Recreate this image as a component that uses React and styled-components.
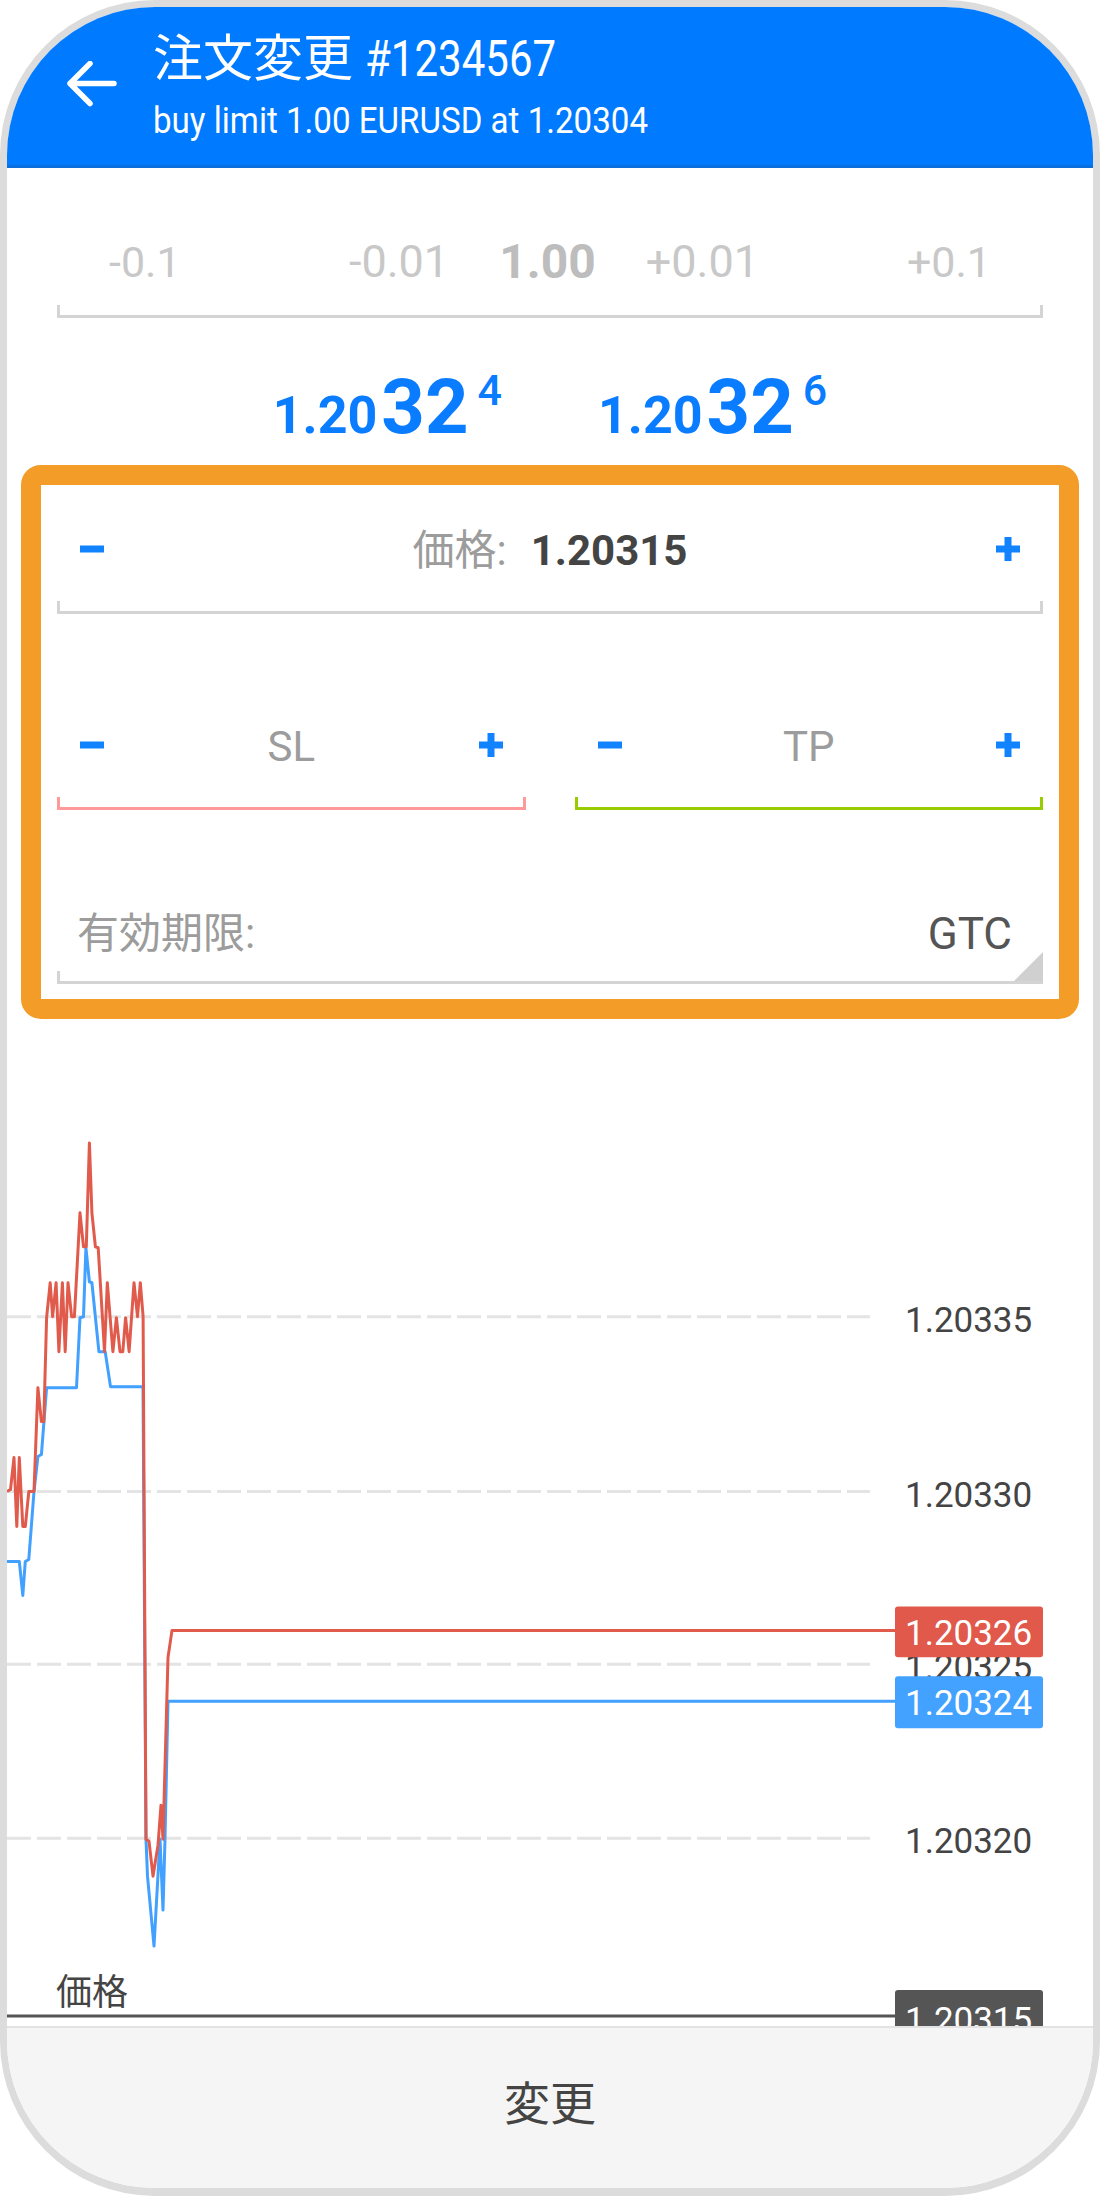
import React from 'react';
import styled, { createGlobalStyle } from 'styled-components';

const GlobalStyle = createGlobalStyle`
	html, body {
		margin: 0;
		background: #fff;
		font-family: Roboto, "Noto Sans CJK JP", sans-serif;
	}
`;

const Frame = styled.div`
	height: 2196px;
	box-sizing: border-box;
	border: 7px solid #dcdcdc;
	border-bottom-width: 8px;
	border-radius: 155px;
	overflow: hidden;
	display: flex;
	flex-direction: column;
	background: #fff;
`;

const Header = styled.header`
	flex: none;
	height: 161px;
	box-sizing: border-box;
	display: flex;
	align-items: flex-start;
	gap: 36px;
	padding: 22px 0 0 60px;
	background: #007aff;
	border-bottom: 3px solid #0a6fdd;
	color: #fff;
`;

const BackIcon = styled.svg`
	flex: none;
	width: 50px;
	height: 46px;
	margin-top: 32px;
`;

const Titles = styled.div`
	display: flex;
	flex-direction: column;
	white-space: nowrap;
`;

const Title = styled.div`
	font-size: 50px;
	line-height: 60px;
`;

const Subtitle = styled.div`
	font-size: 36px;
	line-height: 44px;
	margin-top: 10px;
`;

const Narrow = styled.span`
	display: inline-block;
	transform: scaleX(${p => p.$scale});
	transform-origin: left center;
`;

const LotSection = styled.div`
	flex: none;
	padding: 59px 50px 0;
`;

const LotRow = styled.div`
	display: grid;
	grid-template-columns: 1fr auto 1fr;
	align-items: center;
	height: 70px;
	padding: 0 52px;
	font-size: 43px;
	line-height: 70px;
	color: #c8c8c8;
	margin-bottom: 8px;
`;

const LotStep = styled.span`
	justify-self: ${p => p.$side};
`;

const LotCenter = styled.div`
	display: flex;
	gap: 50px;
	font-size: 45px;
	transform: translateX(4px);
`;

const LotValue = styled.span`
	font-size: 48px;
	font-weight: 700;
	color: #bdbdbd;
`;

const Bracket = styled.div`
	position: relative;
	height: 13px;
	box-sizing: border-box;
	border: 3px solid ${p => p.$color || '#d4d4d4'};
	border-top: none;
	${p => p.$spinner && `
		&::after {
			content: '';
			position: absolute;
			right: -3px;
			bottom: 0;
			width: 29px;
			height: 29px;
			background: #d0d0d0;
			clip-path: polygon(100% 0, 100% 100%, 0 100%);
		}
	`}
`;

const Quotes = styled.div`
	flex: none;
	display: flex;
	justify-content: center;
	gap: 96px;
	margin: 51px 0 20px;
`;

const Quote = styled.div`
	display: flex;
	align-items: baseline;
	color: #0a7cff;
	font-weight: 700;
	line-height: 1;
`;

const QuoteSmall = styled.span`
	font-size: 52px;
`;

const QuoteBig = styled.span`
	font-size: 76px;
	margin-left: 4px;
`;

const QuoteSup = styled.span`
	align-self: flex-start;
	font-size: 43px;
	font-weight: 500;
	margin-left: 9px;
`;

const OrderBox = styled.section`
	flex: none;
	margin: 0 14px;
	border: 20px solid #f39c27;
	border-radius: 20px;
	padding: 26px 16px 15px;
	background: #fff;
`;

const StepRow = styled.div`
	display: flex;
	align-items: center;
	justify-content: space-between;
	height: 80px;
	padding: 0 23px;
	margin-bottom: 10px;
	font-size: 42px;
	line-height: 1;
	color: #9c9c9c;
`;

const SignIcon = styled.svg`
	flex: none;
	width: 24px;
	height: 24px;
	fill: #1283ff;
	margin-bottom: 4px;
`;

const FieldValue = styled.span`
	margin-left: 24px;
	font-weight: 700;
	color: #444;
`;

const PairRow = styled.div`
	display: grid;
	grid-template-columns: 1fr 1fr;
	column-gap: 49px;
	margin-top: 93px;
`;

const ExpiryRow = styled.div`
	display: flex;
	align-items: center;
	justify-content: space-between;
	height: 70px;
	margin: 89px 0 2px;
	padding: 0 31px 0 20px;
	line-height: 1;
`;

const ExpiryLabel = styled.span`
	font-size: 42px;
	color: #9c9c9c;
`;

const ExpiryValue = styled.span`
	font-size: 44px;
	color: #555;
`;

const ChartArea = styled.div`
	flex: 1;
	min-height: 0;
`;

const ChartSvg = styled.svg`
	display: block;
	width: 100%;
	height: 100%;
	font-family: Roboto, "Noto Sans CJK JP", sans-serif;
`;

const Footer = styled.footer`
	flex: none;
	height: 162px;
	box-sizing: border-box;
	display: flex;
	align-items: center;
	justify-content: center;
	padding-bottom: 8px;
	background: #f5f5f5;
	border-top: 2px solid #e3e3e3;
	font-size: 46px;
	line-height: 1;
	color: #444;
`;

const Sign = ({ plus }) => (
	<SignIcon viewBox="0 0 24 24">
		<rect x="0" y="8.5" width="24" height="7" />
		{plus && <rect x="8.5" y="0" width="7" height="24" />}
	</SignIcon>
);

const Stepper = ({ children }) => (
	<StepRow>
		<Sign />
		<span>{children}</span>
		<Sign plus />
	</StepRow>
);

const red = [
	[7, 1491], [10.5, 1489], [14, 1457], [16.8, 1526], [19.3, 1457], [22.8, 1526], [25.3, 1526],
	[28.8, 1491], [34, 1491], [37.9, 1387], [41.4, 1421], [43.8, 1421], [46.6, 1317], [50.2, 1282],
	[52.6, 1316], [56.1, 1282], [58.9, 1351], [62.4, 1282], [65.2, 1351], [68, 1282], [71.6, 1316],
	[74.4, 1316], [80, 1212], [83.5, 1246], [86.3, 1246], [89.4, 1142], [91.9, 1212], [95.4, 1246],
	[98.2, 1247], [104.5, 1351], [107.3, 1282], [112.9, 1351], [116.4, 1317], [120, 1351],
	[122.8, 1351], [125.6, 1317], [129.1, 1351], [134, 1282], [137.5, 1316], [140.3, 1282],
	[143.1, 1316], [146, 1839], [149, 1841], [153, 1876], [158, 1845], [161, 1805], [163, 1839],
	[168, 1657], [172, 1630], [895, 1630],
];

const blue = [
	[7, 1561], [19.3, 1561], [22.8, 1595], [25.3, 1561], [28.8, 1559], [34, 1491], [37.9, 1456],
	[41.4, 1454], [46.6, 1387], [76.5, 1387], [80, 1317], [83.5, 1316], [85.9, 1247], [89.4, 1281],
	[91.9, 1282], [98.9, 1351], [105.2, 1351], [110.5, 1386], [143, 1386], [146, 1839],
	[147.5, 1876], [154, 1946], [160, 1839], [163, 1910], [165, 1839], [168, 1701], [895, 1701],
];

const grid = [
	{ y: 1316, label: '1.20335' },
	{ y: 1491, label: '1.20330' },
	{ y: 1664, label: '1.20325' },
	{ y: 1838, label: '1.20320' },
];

const pts = list => list.map(p => p.join(',')).join(' ');

const Chart = () => (
	<ChartArea>
		<ChartSvg viewBox="7 1018 1086 1008" preserveAspectRatio="none">
			{grid.map(g => (
				<g key={g.label}>
					<line x1="7" x2="870" y1={g.y} y2={g.y} stroke="#e4e4e4" strokeWidth="3" strokeDasharray="24 6" />
					<text x="905" y={g.y + 15} fontSize="35" fill="#444">{g.label}</text>
				</g>
			))}
			<polyline points={pts(blue)} fill="none" stroke="#42a0ff" strokeWidth="3" strokeLinejoin="round" />
			<polyline points={pts(red)} fill="none" stroke="#e15b4c" strokeWidth="3" strokeLinejoin="round" />
			<rect x="895" y="1606" width="148" height="51" rx="3" fill="#e0594b" />
			<text x="905" y="1645" fontSize="35" fill="#fff">1.20326</text>
			<rect x="895" y="1676" width="148" height="52" rx="3" fill="#43a1ff" />
			<text x="905" y="1715" fontSize="35" fill="#fff">1.20324</text>
			<text x="56" y="2005" fontSize="36" fill="#444">価格</text>
			<line x1="7" x2="895" y1="2016" y2="2016" stroke="#555" strokeWidth="3" />
			<rect x="895" y="1990" width="148" height="60" rx="3" fill="#555" />
			<text x="905" y="2032" fontSize="35" fill="#fff">1.20315</text>
		</ChartSvg>
	</ChartArea>
);

const App = () => (
	<>
		<GlobalStyle />
		<Frame>
			<Header>
				<BackIcon viewBox="0 0 50 46" fill="none" stroke="#fff" strokeWidth="5.5" strokeLinecap="round" strokeLinejoin="round">
					<path d="M47 22.5H3M23 2.5L3 22.5L23 42.5" />
				</BackIcon>
				<Titles>
					<Title>
						注文変更 <Narrow $scale={0.84}>#1234567</Narrow>
					</Title>
					<Subtitle>
						<Narrow $scale={0.92}>buy limit 1.00 EURUSD at 1.20304</Narrow>
					</Subtitle>
				</Titles>
			</Header>

			<LotSection>
				<LotRow>
					<LotStep $side="start">-0.1</LotStep>
					<LotCenter>
						<span>-0.01</span>
						<LotValue>1.00</LotValue>
						<span>+0.01</span>
					</LotCenter>
					<LotStep $side="end">+0.1</LotStep>
				</LotRow>
				<Bracket />
			</LotSection>

			<Quotes>
				<Quote>
					<QuoteSmall>1.20</QuoteSmall>
					<QuoteBig>32</QuoteBig>
					<QuoteSup>4</QuoteSup>
				</Quote>
				<Quote>
					<QuoteSmall>1.20</QuoteSmall>
					<QuoteBig>32</QuoteBig>
					<QuoteSup>6</QuoteSup>
				</Quote>
			</Quotes>

			<OrderBox>
				<Stepper>
					価格:<FieldValue>1.20315</FieldValue>
				</Stepper>
				<Bracket />
				<PairRow>
					<div>
						<Stepper>SL</Stepper>
						<Bracket $color="#ff9a9a" />
					</div>
					<div>
						<Stepper>TP</Stepper>
						<Bracket $color="#99cc00" />
					</div>
				</PairRow>
				<ExpiryRow>
					<ExpiryLabel>有効期限:</ExpiryLabel>
					<ExpiryValue>GTC</ExpiryValue>
				</ExpiryRow>
				<Bracket $spinner />
			</OrderBox>

			<Chart />

			<Footer>変更</Footer>
		</Frame>
	</>
);

export default App;
